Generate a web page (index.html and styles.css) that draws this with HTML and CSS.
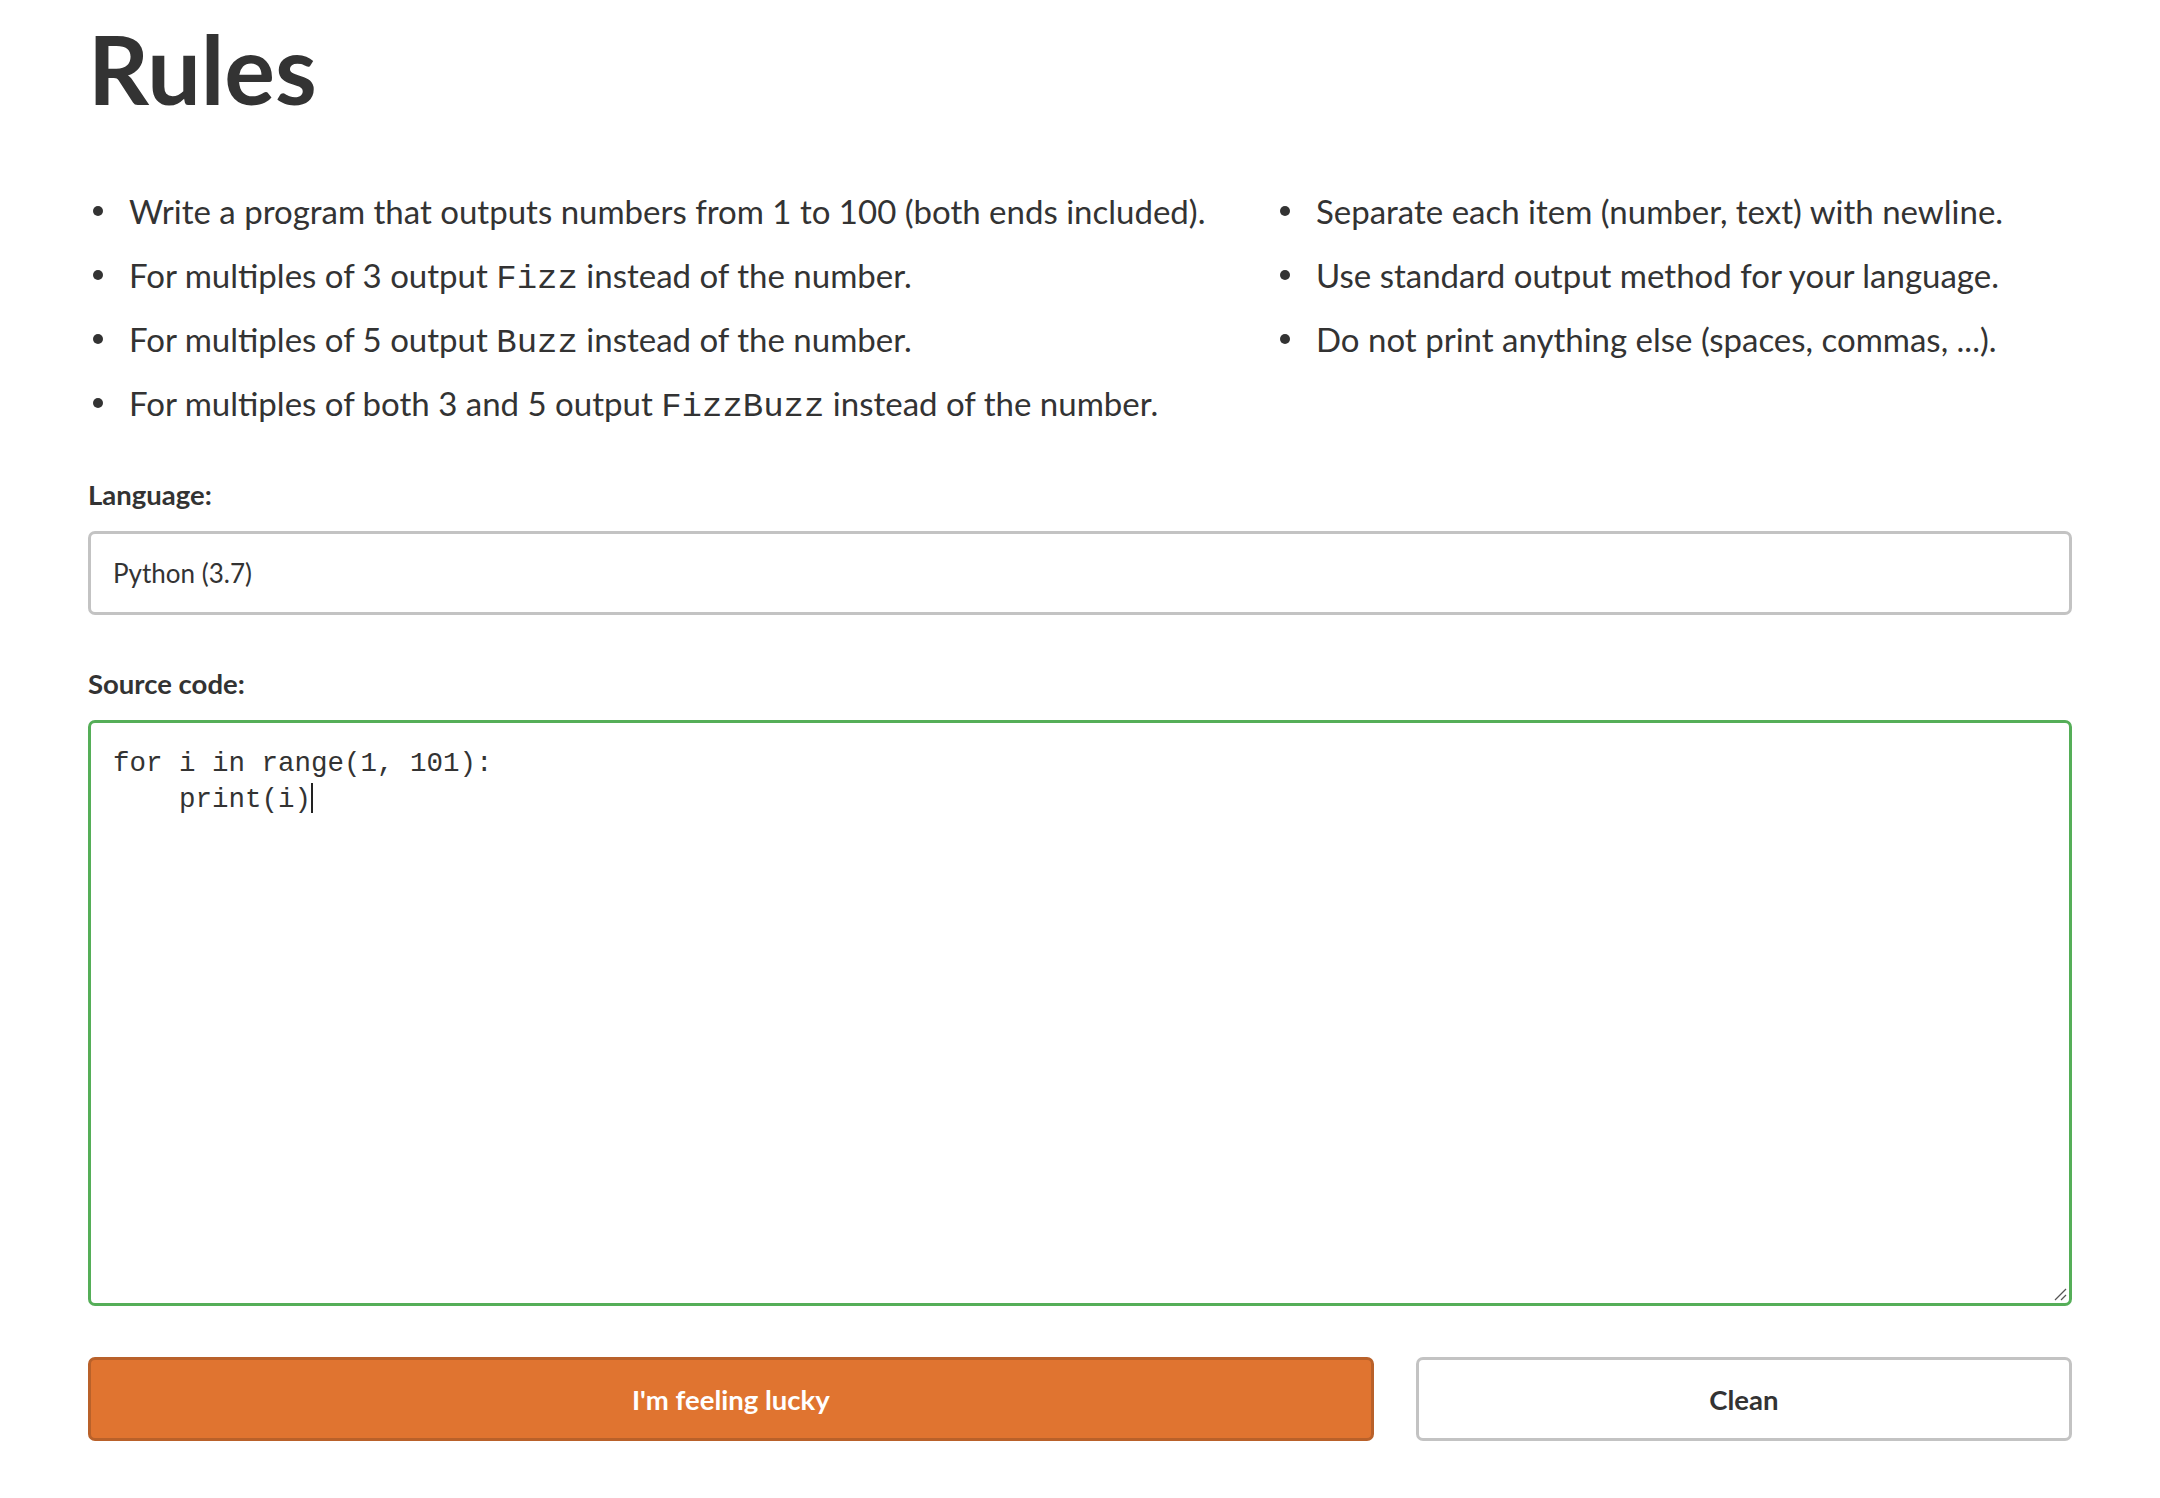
FILE: index.html
```html
<!DOCTYPE html>
<html lang="en">
<head>
<meta charset="utf-8">
<title>Rules</title>
<link rel="stylesheet" href="styles.css">
</head>
<body>
<main class="page">
  <h1 class="title">Rules</h1>
  <div class="rules">
    <ul class="rules-list">
      <li>Write a program that outputs numbers from 1 to 100 (both ends included).</li>
      <li>For multiples of 3 output <code>Fizz</code> instead of the number.</li>
      <li>For multiples of 5 output <code>Buzz</code> instead of the number.</li>
      <li>For multiples of both 3 and 5 output <code>FizzBuzz</code> instead of the number.</li>
    </ul>
    <ul class="rules-list">
      <li>Separate each item (number, text) with newline.</li>
      <li>Use standard output method for your language.</li>
      <li>Do not print anything else (spaces, commas, ...).</li>
    </ul>
  </div>
  <form class="form">
    <label class="label">Language:</label>
    <div class="select">Python (3.7)</div>
    <label class="label label-code">Source code:</label>
    <div class="editor">
      <pre class="code">for i in range(1, 101):
    print(i)<span class="caret"></span></pre>
      <svg class="grip" width="14" height="14" viewBox="0 0 14 14">
        <line x1="2" y1="13" x2="13" y2="2" stroke="#555" stroke-width="1.3"/>
        <line x1="8" y1="13" x2="13" y2="8" stroke="#555" stroke-width="1.3"/>
      </svg>
    </div>
    <div class="actions">
      <button type="button" class="btn btn-primary">I'm feeling lucky</button>
      <button type="button" class="btn btn-default">Clean</button>
    </div>
  </form>
</main>
</body>
</html>
```

FILE: styles.css
```css
html, body {
  margin: 0;
  padding: 0;
  background: #ffffff;
}

body {
  font-family: Lato, "Noto Sans", sans-serif;
  color: #333333;
}

.page {
  padding: 0 88px;
}

.title {
  margin: 0;
  padding-top: 13px;
  font-size: 95px;
  line-height: 110px;
  font-weight: 700;
  color: #333333;
}

.rules {
  display: grid;
  grid-template-columns: 1187px 1fr;
  margin-top: 64px;
}

.rules-list {
  margin: 0;
  padding: 0 0 0 41px;
  list-style: none;
  font-size: 33px;
}

.rules-list li {
  position: relative;
  height: 48px;
  line-height: 48px;
  margin-bottom: 16px;
}

.rules-list li::before {
  content: "";
  position: absolute;
  left: -36px;
  top: 19px;
  width: 10px;
  height: 10px;
  border-radius: 50%;
  background: #333333;
}

code {
  font-family: "Liberation Mono", "DejaVu Sans Mono", monospace;
  font-size: 34px;
  line-height: 1;
}

.form {
  display: flex;
  flex-direction: column;
  margin-top: 34px;
}

.label {
  font-size: 27.5px;
  font-weight: 700;
  line-height: 36px;
  margin-bottom: 18px;
}

.label-code {
  margin-top: 51px;
}

.select {
  height: 78px;
  border: 3px solid #c3c3c3;
  border-radius: 7px;
  padding: 0 22px;
  display: flex;
  align-items: center;
  font-size: 26px;
}

.editor {
  position: relative;
  height: 586px;
  border: 3px solid #55ae58;
  border-radius: 7px;
  padding: 23px 22px 20px;
  box-sizing: border-box;
}

.code {
  margin: 0;
  font-family: "Liberation Mono", "DejaVu Sans Mono", monospace;
  font-size: 27.5px;
  line-height: 36px;
  color: #333333;
}

.caret {
  display: inline-block;
  width: 2px;
  height: 30px;
  background: #222;
  vertical-align: -6px;
}

.grip {
  position: absolute;
  right: 2px;
  bottom: 2px;
}

.actions {
  display: grid;
  grid-template-columns: 1285fr 656fr;
  gap: 42px;
  margin-top: 51px;
}

.btn {
  height: 84px;
  border-radius: 7px;
  font-family: Lato, "Noto Sans", sans-serif;
  font-size: 27.5px;
  font-weight: 700;
  cursor: pointer;
}

.btn-primary {
  background: #e07430;
  border: 3px solid #b9612a;
  color: #ffffff;
}

.btn-default {
  background: #ffffff;
  border: 3px solid #c3c3c3;
  color: #333333;
}
```
